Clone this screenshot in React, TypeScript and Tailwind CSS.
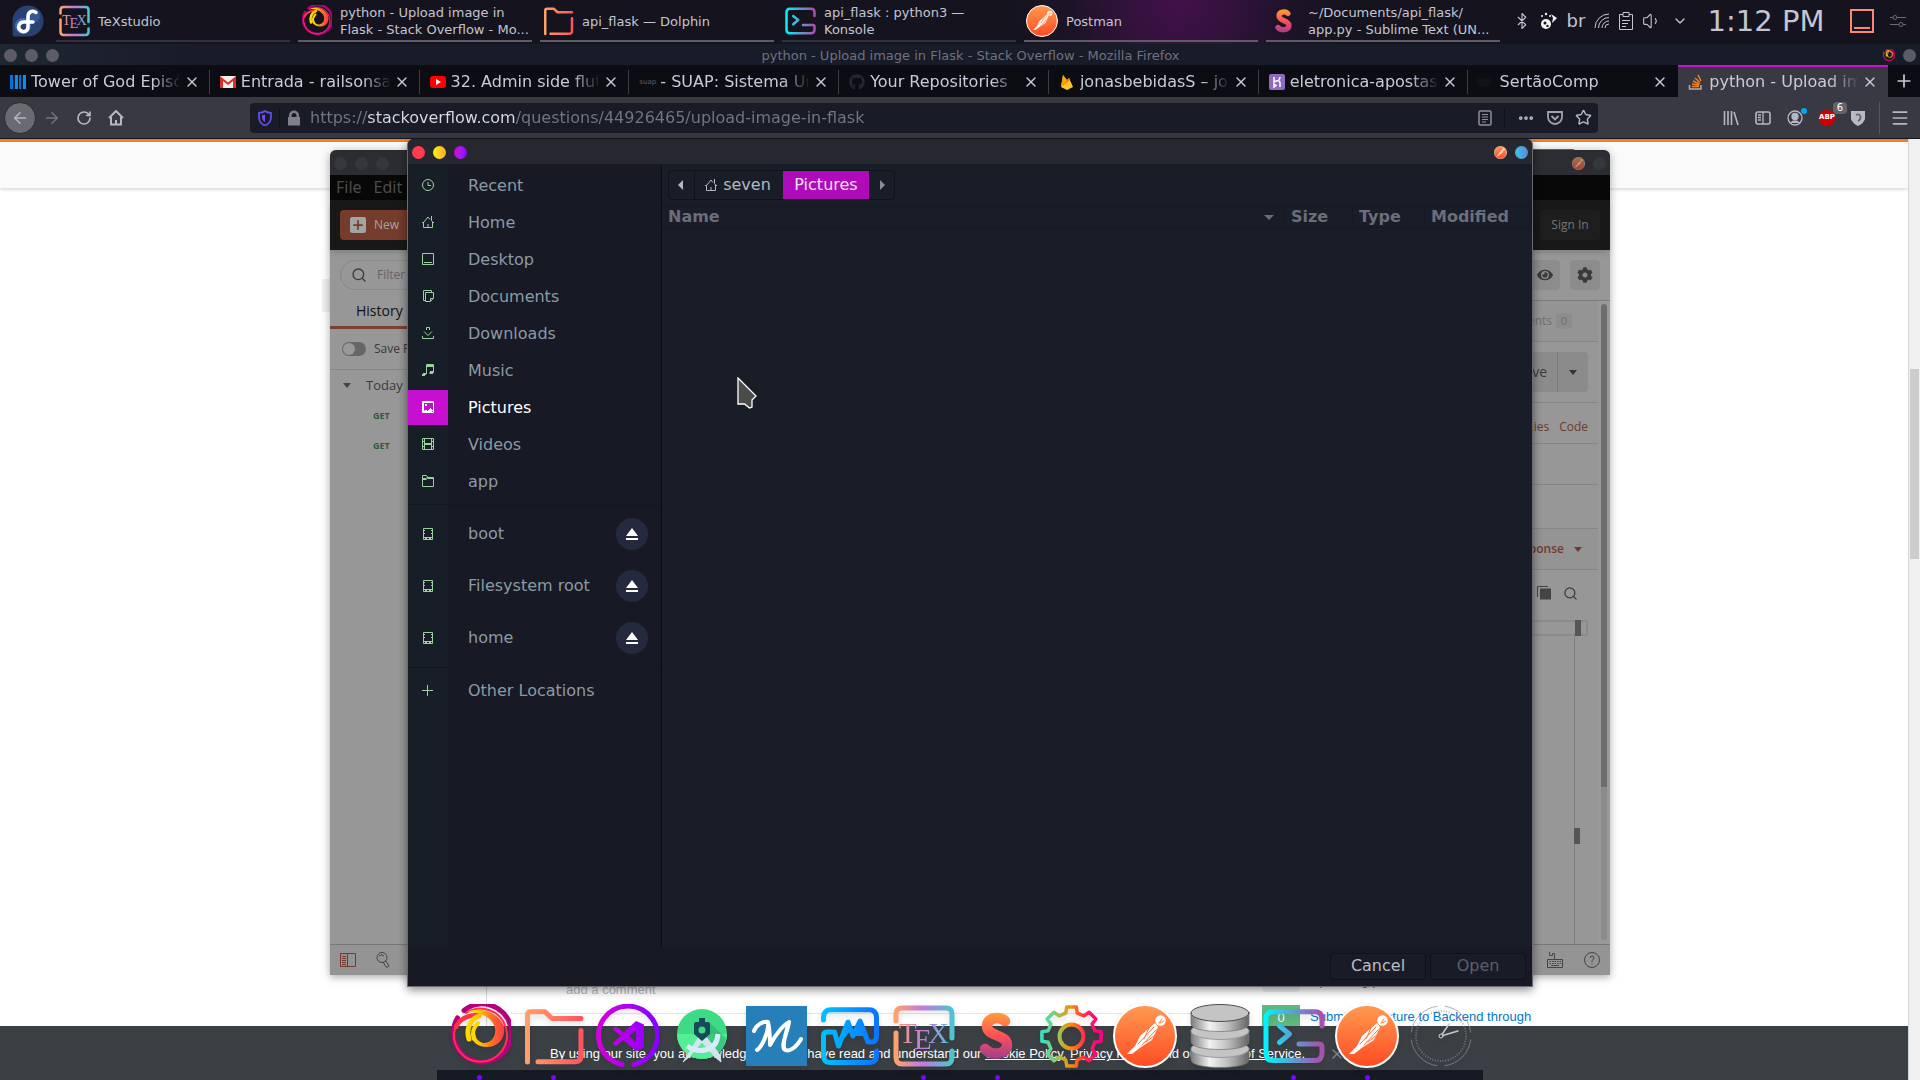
import React from "react";
import {
  ArrowLeft, ArrowRight, RotateCw, Star, X, Plus, Menu, Search, ChevronDown, Bluetooth, Volume1, Ellipsis,
} from "lucide-react";
import { FaGithub, FaCog, FaEye } from "react-icons/fa";

type Kids = { children?: React.ReactNode };

/* ---------- shared gradients ---------- */
const GRADIENTS: { id: string; v?: boolean; stops: string[] }[] = [
  { id: "gFire", stops: ["#fff000", "#ffe000", "#ffc400", "#ff6a2a", "#ff2a4d"] },
  { id: "gFold", stops: ["#ffa268", "#ff5460"] },
  { id: "gVs", stops: ["#d400dc", "#8a00ff"] },
  { id: "gMon", stops: ["#00c3ff", "#0a74ff"] },
  { id: "gTex", stops: ["#ffa36a", "#c07ae0", "#4fc3cf"] },
  { id: "gSub", v: true, stops: ["#ffb02e", "#ff4f58", "#8a3a9a"] },
  { id: "gGear", stops: ["#3ce0c0", "#8ec95a", "#ff8c00", "#ff2850", "#ff0080"] },
  { id: "gPost", v: true, stops: ["#ff974f", "#ff4e25"] },
  { id: "gCyl", stops: ["#7d7d7d", "#f2f2f2", "#bdbdbd", "#6c6c6c"] },
  { id: "gKon", stops: ["#00f4ff", "#5b9fd0", "#a94fb0"] },
];

function Defs() {
  return (
    <svg width="0" height="0" className="absolute" aria-hidden="true">
      <defs>
        {GRADIENTS.map((g) => (
          <linearGradient key={g.id} id={g.id} gradientUnits="userSpaceOnUse" x1="4" y1="4" x2={g.v ? 4 : 60} y2={g.v ? 60 : 4}>
            {g.stops.map((c, i) => (
              <stop key={c} offset={i / (g.stops.length - 1)} stopColor={c} />
            ))}
          </linearGradient>
        ))}
      </defs>
    </svg>
  );
}

function App64({ children, className = "size-16" }: Kids & { className?: string }) {
  return (
    <svg viewBox="0 0 64 64" className={`${className} shrink-0`} fill="none" strokeLinecap="round" strokeLinejoin="round" aria-hidden="true">
      {children}
    </svg>
  );
}

const Firefox = ({ className }: { className?: string }) => (
  <App64 className={className}>
    <path d="M17 6.500 A29 29 0 1 1 10.500 14" stroke="#b4007c" strokeWidth="5" />
    <path d="M19 9 A26.500 26.500 0 1 1 8 24" stroke="#ff2f50" strokeWidth="2" />
    <path d="M9 23 C13 14 22 11 32 11" stroke="#ff3148" strokeWidth="4.500" />
    <path d="M20 8 C34 2 50 8 56 20 C60 30 54 43 40 43 C30 43 24 37 25 30 C27 27 29 30 29 33 C31 38 36 40 40 38.500 C46 37 49 31 48 24 C46 15 36 8 20 8Z" fill="url(#gFire)" />
    <path d="M32 12 C23 15 19 25 22 35" stroke="url(#gFire)" strokeWidth="5" />
    <path d="M31 19 C26 24 25 30 27 35" stroke="#ffd800" strokeWidth="4" />
  </App64>
);
const Folder = ({ className }: { className?: string }) => (
  <App64 className={className}>
    <path d="M6.500 58 V11 Q6.500 7.700 10 7.700 H24 L31 14.500 H60 M60 26.500 V52 Q60 57.700 54 57.700 H17" stroke="url(#gFold)" strokeWidth="5" />
  </App64>
);
const Code = () => (
  <App64>
    <path d="M27 60.500 A29.500 29.500 0 1 1 39 60.500" stroke="url(#gVs)" strokeWidth="5" />
    <path fillRule="evenodd" d="M41 17 L49 20.500 V43.500 L41 47.500 L28.500 36 L21 42 L17.500 39.500 L25.500 32 L17.500 25 L21 22.500 L28.500 28.500Z M41 26.500 L34 32 L41 38Z" fill="url(#gVs)" />
  </App64>
);
const Studio = () => (
  <App64>
    <circle cx="33" cy="30" r="25" fill="#3ddc84" />
    <path d="M8 30 A25 25 0 0 0 58 30Z" fill="#54ee95" />
    <path d="M41 19 L57 34 A25 25 0 0 1 48 50 L33 35Z" fill="#2cae72" opacity=".6" />
    <path d="M29 34 L18 52 L14 58 L20 53 L33 38 L46 53 L52 58 L51 51 L38 34Z" fill="#cfe6ee" stroke="#cfe6ee" strokeWidth="1" />
    <path d="M18 42 C29 50 48 48 49 30" stroke="#d7ecfb" strokeWidth="5" strokeLinecap="butt" />
    <path d="M25 20 Q25 18 27 18 H30 V14 H36 V18 H39 Q41 18 41 20 V30 L33 37 L25 30Z" fill="#16495a" />
    <circle cx="33" cy="26" r="3.500" fill="#3ddc84" />
  </App64>
);
const Script = () => (
  <App64>
    <rect x="3" y="2" width="61" height="60" fill="#267fb8" />
    <path d="M11 27 C13 21 20 17 25 18 C26 26 20 42 14 46 M25 18 C27 26 27 34 27 41 C32 32 40 21 46 18 C45 27 38 40 41 45 C45 49 53 44 58 35 M46 18 C44 26 40 36 41 43" stroke="#fff" strokeWidth="4" />
  </App64>
);
const Monitor = () => (
  <App64>
    <path d="M6.500 16 V13 Q7 5.700 14 5.700 H52 Q59 5.700 59.500 13 V33 Q59 38 55 38 H51 L43 17 L36 32 L31 18 L21.500 42 L17.500 28 H10 Q6.500 28 6.500 32 V52 Q7 58.500 13 58.500 H53 Q59.500 58 59.500 52 V47" stroke="url(#gMon)" strokeWidth="5" />
    <path d="M43 17 L36 32 L48 32Z M31 18 L21.500 42 L34 26Z" fill="url(#gMon)" />
  </App64>
);
const Tex = ({ className }: { className?: string }) => (
  <App64 className={className}>
    <path d="M5 17 V10 Q5 4 11 4 H55 Q61 4 61 10 V34 M61 47 V53 Q61 60 55 60 H11 Q5 60 5 53 V29" stroke="url(#gTex)" strokeWidth="5" />
    <g fill="url(#gTex)" fontFamily="Liberation Serif, serif" fontSize="29">
      <text x="8" y="39">T</text>
      <text x="23" y="45">E</text>
      <text x="37" y="39">X</text>
    </g>
  </App64>
);
const Sublime = ({ className }: { className?: string }) => (
  <App64 className={className}>
    <path d="M40 17 C35 12 22 13 22 22 C22 33 42 30 42 41 C42 51 26 52 20 45" stroke="url(#gSub)" strokeWidth="10.500" />
  </App64>
);
const gearPath = (() => {
  const pts: string[] = [];
  for (let i = 0; i < 8; i++) {
    [[-14, 24], [-9, 30], [9, 30], [14, 24]].forEach(([a, r]) => {
      const t = ((i * 45 + a - 90) * Math.PI) / 180;
      pts.push(`${(32.5 + r * Math.cos(t)).toFixed(1)} ${(32.5 + r * Math.sin(t)).toFixed(1)}`);
    });
  }
  return `M${pts.join("L")}Z`;
})();
const Gear = () => (
  <App64>
    <path d={gearPath} stroke="url(#gGear)" strokeWidth="3.500" />
    <circle cx="32.500" cy="32.500" r="12" stroke="url(#gGear)" strokeWidth="4" />
  </App64>
);
const Postman = ({ className }: { className?: string }) => (
  <App64 className={className}>
    <circle cx="32" cy="32" r="31" fill="url(#gPost)" stroke="#fff" strokeWidth="2" />
    <circle cx="47.500" cy="16.500" r="5.200" fill="#fff" />
    <path d="M46 19 L49 15 M47 19 L51 17" stroke="#ff7a3c" strokeWidth="1" />
    <path d="M42 19 L45 23 L39 36 L28 43 L19 50 L14 50 L22 42 L27 32Z" fill="#fff" />
    <path d="M41 23 L25 40 M43 26 L29 41 M36 24 L31 35 M33 38 L42 31" stroke="#ff7440" strokeWidth="1" />
  </App64>
);
const Database = () => (
  <App64>
    {[45, 27, 9].map((y) => (
      <g key={y}>
        <path d={`M4 ${y} V${y + 11} C4 ${y + 21} 62 ${y + 21} 62 ${y + 11} V${y}Z`} fill="url(#gCyl)" stroke="#707070" strokeWidth=".7" />
        <ellipse cx="33" cy={y} rx="29" ry="8.500" fill="#c4c4c4" stroke={y === 9 ? "#4b4f50" : "#9a9a9a"} strokeWidth="1" />
      </g>
    ))}
  </App64>
);
const Konsole = ({ className }: { className?: string }) => (
  <App64 className={className}>
    <path d="M61 22 V15 Q61 7.700 54 7.700 H12 Q5 7.700 5 15 V49 Q5 56.500 12 56.500 H54 Q61 56.500 61 49 V43 Q61 40 58 40 H38 M18.500 22 L28.500 30 L18.500 38.500" stroke="url(#gKon)" strokeWidth="5" />
  </App64>
);
const Clock = () => (
  <App64>
    <circle cx="32" cy="32" r="30" stroke="#8d9194" strokeWidth="1" strokeDasharray="39 8.100" strokeDashoffset="-4" opacity=".7" />
    <circle cx="32" cy="32" r="25" stroke="#8d9194" strokeWidth="2" strokeDasharray="1 1.600" opacity=".6" strokeLinecap="butt" />
    <path d="M32 32 L40 20 M32 32 L49 27" stroke="#c6c9ca" strokeWidth="1.500" />
    <circle cx="32" cy="32" r="2" fill="#3b4045" stroke="#d6d6d6" />
  </App64>
);
const Fedora = () => (
  <App64 className="size-8">
    <path d="M32 1 A31 31 0 1 1 32 63 H5 Q1 63 1 58 V32 A31 31 0 0 1 32 1Z" fill="#294172" />
    <circle cx="22" cy="42" r="13" stroke="#3c6eb4" strokeWidth="6" />
    <circle cx="42" cy="22" r="14" fill="#3c6eb4" opacity=".5" />
    <path d="M48 15 C40 9 32 15 32 23 V44 C32 52 24 56 17 51 C10 45 14 34 24 34 H42" stroke="#fff" strokeWidth="7" />
  </App64>
);

/* ---------- desktop panel ---------- */
const TASKS = [
  { icon: <Tex className="size-8" />, label: "TeXstudio", dim: true },
  { icon: <Firefox className="size-8" />, label: "python - Upload image in Flask - Stack Overflow - Mo..." },
  { icon: <Folder className="size-8" />, label: "api_flask — Dolphin" },
  { icon: <Konsole className="size-8" />, label: "api_flask : python3 — Konsole", dim: true },
  { icon: <Postman className="size-8" />, label: "Postman" },
  { icon: <Sublime className="size-8" />, label: "~/Documents/api_flask/ app.py - Sublime Text (UN..." },
];

function Panel() {
  return (
    <header className="flex h-11 shrink-0 items-start bg-[radial-gradient(circle_at_1180px_0px,#42104a_0,#34123d_50px,#1d1328_110px,#15131e_170px)] text-[#c3c5d2]">
      <button aria-label="Application launcher" className="flex h-10 w-14 items-center justify-center pt-0.5">
        <Fedora />
      </button>
      <nav className="flex min-w-0 flex-1 gap-2" aria-label="Open windows">
        {TASKS.map((t) => (
          <button key={t.label} className={`flex h-[42px] min-w-0 flex-1 items-center gap-2 border-b-2 pt-0.5 pl-0.5 text-left text-[13px] leading-[17px] ${t.dim ? "border-[#33313d]" : "border-[#5d5b68]"}`}>
            {t.icon}
            <span className="min-w-0 flex-1">{t.label}</span>
          </button>
        ))}
      </nav>
      <div className="flex h-[42px] w-[420px] shrink-0 items-center pl-2">
        <span className="flex w-7 justify-center"><Bluetooth className="size-[18px]" strokeWidth={1.5} /></span>
        <svg viewBox="0 0 18 18" className="mx-1 size-[18px]" fill="#f4f4f4" aria-hidden="true">
          <circle cx="6" cy="12" r="5" />
          <circle cx="5" cy="11" r="1.500" fill="#15131e" /><circle cx="7.500" cy="14" r="1.200" fill="#15131e" />
          <circle cx="2" cy="4" r="1" /><circle cx="6" cy="2" r="1.200" /><circle cx="10" cy="4" r="1" />
          <path d="M11 2 L17 6 L12 11 L13 6Z" />
        </svg>
        <span className="w-7 text-center text-lg">br</span>
        <svg viewBox="0 0 16 16" className="mx-1 size-4" fill="none" stroke="currentColor" aria-hidden="true">
          <path d="M1 15 A14 14 0 0 1 15 1 M4.500 15 A10.500 10.500 0 0 1 15 4.500 M8 15 A7 7 0 0 1 15 8 M11 15 A4 4 0 0 1 15 11" />
        </svg>
        <svg viewBox="0 0 16 18" className="mx-1 h-[18px] w-4" fill="none" stroke="currentColor" aria-hidden="true">
          <path d="M5 2.500 H1.500 V17.500 H14.500 V2.500 H11 M5 .500 H11 V4.500 H5Z M4 8.500 H12 M4 11.500 H10 M4 14.500 H8" />
        </svg>
        <span className="flex w-7 justify-center"><Volume1 className="size-5" strokeWidth={1.3} /></span>
        <span className="flex w-7 justify-center"><ChevronDown className="size-4" /></span>
        <time className="w-36 text-center text-[29px] leading-none">1:12 PM</time>
        <svg viewBox="0 0 24 24" className="ml-3 size-6" fill="none" aria-hidden="true">
          <path d="M1 1 H23 V23 H1Z M4 19 H20" stroke="#ff8672" strokeWidth="2" />
        </svg>
        <svg viewBox="0 0 16 14" className="ml-4 h-3.5 w-4" fill="none" stroke="#696b78" aria-hidden="true">
          <path d="M0 3.500 H3 M7 3.500 H16 M0 10.500 H9 M13 10.500 H16" />
          <circle cx="5" cy="3.500" r="2" /><circle cx="11" cy="10.500" r="2" />
        </svg>
      </div>
    </header>
  );
}

/* ---------- browser ---------- */
const TABS = [
  { label: "Tower of God Episódio", icon: <span className="h-3.5 w-4 shrink-0 bg-[linear-gradient(90deg,#0a6fd0_0_20%,#062040_20%_30%,#0a8ff0_30%_48%,#0d0e14_48%_54%,#0a6fd0_54%_70%,#062040_70%_80%,#0a8ff0_80%)]" /> },
  { label: "Entrada - railsonsantos", icon: <svg viewBox="0 0 16 12" className="w-4 shrink-0" aria-hidden="true"><path d="M0 0H16V12H0Z" fill="#eee" /><path d="M0 12V0L8 6.500L16 0V12H13V5L8 9L3 5V12Z" fill="#d93025" /></svg> },
  { label: "32. Admin side flutter", icon: <svg viewBox="0 0 16 12" className="w-4 shrink-0" aria-hidden="true"><rect width="16" height="12" rx="3" fill="#f00" /><path d="M6 3L11 6L6 9Z" fill="#fff" /></svg> },
  { label: "- SUAP: Sistema Unificado", icon: <span className="w-4 shrink-0 text-[7px] text-[#5b5d66]">suap</span> },
  { label: "Your Repositories", icon: <FaGithub className="size-4 shrink-0 text-[#22262d]" /> },
  { label: "jonasbebidasS – jonas", icon: <svg viewBox="0 0 16 16" className="size-4 shrink-0" aria-hidden="true"><path d="M2 13L4 1L8 6L10 4L14 13L8 16Z" fill="#ffca28" /><path d="M2 13L4 1L8 7Z" fill="#ffa000" /><path d="M2 13L10 4L11 6Z" fill="#f57c00" /></svg> },
  { label: "eletronica-apostas · H", icon: <svg viewBox="0 0 16 16" className="size-4 shrink-0" aria-hidden="true"><rect width="16" height="16" rx="2" fill="#8f6ac0" /><path d="M5 3V8Q11 5 11 9V13M5 10V13L7 11.500ZM11 3Q11 5 9.500 6" stroke="#fff" strokeWidth="1.500" fill="none" /></svg> },
  { label: "SertãoComp", icon: <span className="mr-1 h-2 w-3 shrink-0 bg-[#111318]" /> },
  { label: "python - Upload image", active: true, icon: <svg viewBox="0 0 16 16" className="size-4 shrink-0" fill="none" aria-hidden="true"><path d="M1.500 11V15H13V11" stroke="#b0b0b0" strokeWidth="1.500" /><path d="M4 12.500H11M4 10L11 11M5 7L11.500 10M7 4L12 8.500M10 1L13 7" stroke="#f48024" strokeWidth="1.500" /></svg> },
];

function BrowserTabs() {
  return (
    <div role="tablist" className="flex h-8 shrink-0 bg-[#0c0d13] text-base text-[#c9cad4]">
      {TABS.map((t) => (
        <div key={t.label} className={`flex min-w-0 flex-1 items-center gap-[5px] border-t-2 pr-2.5 pl-2.5 ${t.active ? "border-[#c80fd4] bg-[#383943]" : "border-transparent"}`}>
          {t.icon}
          <button role="tab" aria-selected={!!t.active} className="min-w-0 flex-1 overflow-hidden text-left whitespace-nowrap [mask-image:linear-gradient(90deg,#000_82%,rgba(0,0,0,.1))]">
            {t.label}
          </button>
          <button aria-label={`Close ${t.label}`}><X className="size-4" /></button>
          {!t.active && t.label !== "SertãoComp" && <span className="-mr-2.5 ml-1 h-6 w-px bg-[#3b3c44]" />}
        </div>
      ))}
      <button aria-label="New tab" className="flex w-8 items-center justify-center"><Plus className="size-5" /></button>
    </div>
  );
}

const ShieldIcon = () => (
  <svg viewBox="0 0 16 16" className="size-4 shrink-0" fill="none" aria-hidden="true">
    <path d="M8 1 C10 2.500 12 3 14 3 V7 C14 11 12 14 8 15.500 C4 14 2 11 2 7 V3 C4 3 6 2.500 8 1Z" stroke="#5b50e8" strokeWidth="1.800" />
    <path d="M8 4.500 V12 C6 11 5 9 5 7 V5.500Z" fill="#7a4df0" />
  </svg>
);

function NavBar() {
  return (
    <div className="flex h-[42px] shrink-0 items-center border-b border-[#15161f] bg-[#383943] text-[#b6b7c4]">
      <button aria-label="Back" className="ml-1 flex size-8 items-center justify-center rounded-full border border-[#2b2c33] bg-[#6a6a73]"><ArrowLeft className="size-[18px]" /></button>
      <button aria-label="Forward" className="flex w-8 justify-center text-[#73747f]"><ArrowRight className="size-[18px]" /></button>
      <button aria-label="Reload" className="flex w-8 justify-center"><RotateCw className="size-4" strokeWidth={2.5} /></button>
      <button aria-label="Home page" className="flex w-8 justify-center">
        <svg viewBox="0 0 16 16" className="size-4" fill="none" stroke="currentColor" strokeWidth="2"><path d="M1 8 L8 1 L15 8 M3 7 V14.500 H13 V7 M8 14 V10" /></svg>
      </button>
      <div className="ml-[118px] flex h-[30px] min-w-0 flex-1 items-center rounded bg-[#191c27] pl-[7px]">
        <ShieldIcon />
        <span className="mx-[6px] h-5 w-px bg-[#0e1018]" />
        <svg viewBox="0 0 16 16" className="mr-2 size-4 shrink-0" fill="#7f808c" aria-hidden="true"><path fillRule="evenodd" d="M3 7V5.500A5 5 0 0 1 13 5.500V7H14V15.500H2V7ZM5.500 7H10.500V5.500A2.500 2.500 0 0 0 5.500 5.500Z" /></svg>
        <input aria-label="Address" readOnly value="https://stackoverflow.com/questions/44926465/upload-image-in-flask" className="min-w-0 flex-1 bg-[linear-gradient(90deg,#74767f_58px,#dadbe3_58px_206px,#74767f_206px)] bg-clip-text text-base text-transparent outline-none" />
        <button aria-label="Reader view" className="mx-3">
          <svg viewBox="0 0 14 16" className="h-4 w-3.5" fill="none" stroke="#8e8f9b" strokeWidth="1.500"><rect x="1" y="1" width="12" height="14" rx="1.500" /><path d="M4 4.500H10M4 7H10M4 9.500H10M4 12H8" strokeWidth="1" /></svg>
        </button>
        <span className="h-5 w-px bg-[#0e1018]" />
        <button aria-label="Page actions" className="ml-3"><Ellipsis className="size-[18px]" strokeWidth={3} /></button>
        <button aria-label="Save to Pocket" className="ml-3">
          <svg viewBox="0 0 16 14" className="h-3.5 w-4" fill="none" stroke="#a1a2ae" strokeWidth="1.800"><path d="M1 1H15V6A7 7 0 0 1 1 6ZM4.500 5L8 8.500L11.500 5" /></svg>
        </button>
        <button aria-label="Bookmark" className="mr-1.5 ml-3"><Star className="size-[17px]" /></button>
      </div>
      <div className="ml-[117px] flex items-center gap-4 pl-2">
        <svg viewBox="0 0 16 14" className="h-3.5 w-4" fill="none" stroke="currentColor" strokeWidth="1.600" aria-hidden="true"><path d="M1.500 0V14M5 0V14M8.500 0V14M11 1L15 14" /></svg>
        <svg viewBox="0 0 16 14" className="h-3.5 w-4" fill="none" stroke="currentColor" strokeWidth="1.600" aria-hidden="true"><rect x="1" y="1" width="14" height="12" rx="2" /><path d="M8 1V13M3 4H6M3 6.500H6M3 9H6" strokeWidth="1.300" /></svg>
        <span className="relative">
          <svg viewBox="0 0 16 16" className="size-4" fill="none" stroke="currentColor" strokeWidth="1.300" aria-hidden="true"><circle cx="8" cy="8" r="7" /><circle cx="8" cy="6.500" r="3" fill="currentColor" /><path d="M3.500 13Q8 9 12.500 13" fill="currentColor" /></svg>
          <span className="absolute -top-0.5 -right-1 size-1.5 rounded-full bg-[#00a8f8]" />
        </span>
        <span className="relative flex size-4 items-center justify-center rounded-full bg-[#d00000] text-[7px] font-bold text-white">
          ABP
          <span className="absolute -top-2 -right-3 rounded-sm bg-[#63636b] px-1 text-[10px] leading-[12px] font-normal">6</span>
        </span>
        <svg viewBox="0 0 14 16" className="h-4 w-3.5" aria-hidden="true"><path d="M0 1H14V9Q12 14 7 16Q2 14 0 9Z" fill="#b9bac6" /><path d="M5 5Q9 3 9.500 7Q9.500 10 7 11" stroke="#62636e" strokeWidth="1.800" fill="none" /></svg>
      </div>
      <span className="ml-3.5 h-8 w-px bg-[#54555f]" />
      <button aria-label="Menu" className="flex w-10 justify-center"><Menu className="size-5" /></button>
    </div>
  );
}

/* ---------- page behind the windows ---------- */
function SitePage() {
  return (
    <main className="flex min-h-0 flex-1 bg-white font-['Liberation_Sans',sans-serif] text-[13px]">
      <div className="flex min-w-0 flex-1 flex-col">
        <div className="flex h-[50px] shrink-0 justify-end border-t-[3px] border-b border-t-[#f48024] border-b-[#e4e6e8] bg-[#fafafb] pt-[7px] pr-[332px] shadow-sm">
          <a href="#signup" aria-label="Sign up" className="h-8 w-[70px] rounded-sm bg-[#0086d8]" />
        </div>
        <div className="mt-[90px] ml-[322px] h-[33px] w-2 bg-[#eff0f1]" />
        <div className="mt-auto flex h-[46px] shrink-0 pl-[486px]">
          <div className="w-[754px] border-l border-[#d6d9dc] pl-6">
            <p className="h-[34px] border-b border-[#e4e6e8] pt-0.5 pl-[55px] leading-4 text-[#b4b9be]">add a comment</p>
          </div>
          <div className="ml-[22px] grid grid-cols-[38px_auto] content-start gap-x-[10px] gap-y-[13px] leading-[17px]">
            <span className="h-3 rounded-sm bg-[#eff0f1]" />
            <a href="#uploading" className="-mt-2 h-5 text-[#0077cc]">Uploading pictures</a>
            <span className="h-[21px] bg-[#5fba7d] pt-1 text-center text-white">0</span>
            <a href="#submit" className="pt-[3px] text-[#0077cc]">Submit the picture to Backend through</a>
          </div>
        </div>
        <div className="flex h-[54px] shrink-0 items-center bg-[#3b4045] pt-0.5 pl-[550px] text-white">
          <p>
            By using our site, you acknowledge that you have read and understand our <a href="#cookie" className="underline">Cookie Policy</a>, <a href="#privacy" className="underline">Privacy Policy</a>, and our <a href="#terms" className="underline">Terms of Service</a>.
          </p>
          <button aria-label="Dismiss" className="ml-6"><X className="size-4 text-[#81868a]" /></button>
        </div>
      </div>
      <div className="w-3 border-l border-[#d4d4d4] bg-[#f0f0f0] px-px pt-[230px]">
        <div className="h-[190px] bg-[#cdcdcd]" />
      </div>
    </main>
  );
}

const Dot = ({ className }: { className: string }) => <span className={`size-[13px] rounded-full ${className}`} />;

/* ---------- Postman window ---------- */
function PostmanWindow() {
  return (
    <section aria-label="Postman" className="absolute top-[150px] right-[310px] bottom-[105px] left-[330px] flex flex-col rounded-t-md bg-[#979797] font-['Open_Sans','Noto_Sans',sans-serif] text-xs text-[#3a3a3a] shadow-[0_2px_8px_rgba(0,0,0,.35)]">
      <div className="flex h-[25px] items-center gap-2 rounded-t-md bg-[#2b2d32] px-1 pt-0.5">
        <Dot className="bg-[#36373a]" /><Dot className="bg-[#36373a]" /><Dot className="bg-[#36373a]" />
        <span className="flex-1" />
        <Postman className="size-[13px] opacity-60" /><Dot className="bg-[#36373a]" />
      </div>
      <div className="flex h-[25px] items-center gap-3 bg-[#080808] px-1.5 pb-0.5 font-['Noto_Sans',sans-serif] text-base text-[#4c4c4c]">
        <button>File</button><button>Edit</button>
      </div>
      <div className="flex h-[50px] items-center justify-between bg-[#181818] px-2.5 shadow-md">
        <button className="flex h-[30px] w-24 items-center gap-2 rounded-sm bg-[#753b2b] pl-2.5 text-[#a3a3a3]">
          <span className="flex size-4 items-center justify-center rounded-xs bg-[#a3a3a3]"><Plus className="size-3.5 text-[#753b2b]" strokeWidth={3} /></span>New
        </button>
        <button className="h-[30px] w-[60px] rounded-sm bg-[#1e1e1e] text-[#777]">Sign In</button>
      </div>
      <div className="flex min-h-0 flex-1">
        <aside className="flex w-[300px] flex-col">
          <label className="mx-2.5 mt-2.5 flex h-[30px] items-center gap-2.5 rounded-full border border-[#898989] pl-2.5">
            <Search className="size-4" />
            <input aria-label="Filter" placeholder="Filter" className="w-24 outline-none placeholder:text-[#636363]" />
          </label>
          <button className="mt-1 h-[35px] w-[150px] border-b-[3px] border-[#7c4030] pt-0.5 pl-[26px] text-left text-sm text-[#111]">History</button>
          <label className="flex h-[41px] items-center gap-2 border-b border-[#858585] pl-3">
            <input type="checkbox" aria-label="Save Responses" className="sr-only" />
            <span className="h-3.5 w-6 rounded-full bg-[#666] p-px"><span className="block size-3 rounded-full bg-[#999]" /></span>
            <span>Save Responses</span>
          </label>
          <div className="flex h-[31px] items-center gap-3 pl-3 text-[13px]">
            <svg viewBox="0 0 10 6" className="w-3 pr-0.5" aria-hidden="true"><path d="M1 0H9L5 5Z" fill="#444" /></svg>Today
          </div>
          <span className="h-[30px] pl-[43px] text-[9px] leading-[30px] font-bold text-[#2a5c40]">GET</span>
          <span className="h-[30px] pl-[43px] text-[9px] leading-[30px] font-bold text-[#2a5c40]">GET</span>
        </aside>
        <div className="flex min-w-0 flex-1 flex-col">
          <div className="flex h-[51px] items-center justify-end gap-2.5 border-b border-[#7d7d7d] pr-2.5">
            <button aria-label="Environment quick look" className="flex size-[30px] items-center justify-center rounded-sm bg-[#8c8c8c]"><FaEye className="size-4" /></button>
            <button aria-label="Settings" className="flex size-[30px] items-center justify-center rounded-sm bg-[#8c8c8c]"><FaCog className="size-4" /></button>
          </div>
          <div className="flex min-h-0 flex-1">
            <div className="flex min-w-0 flex-1 flex-col">
              <div className="flex h-[41px] items-center justify-end gap-1 border-b border-[#858585] bg-[#949494] pr-[26px] text-[#6f6f6f]">
                Comments <span className="w-4 rounded-sm bg-[#8d8d8d] text-center text-[11px] leading-4">0</span>
              </div>
              <div className="flex h-[61px] items-center justify-end border-b border-[#858585] pr-2.5">
                <button className="h-10 rounded-l-sm bg-[#8b8b8b] px-2.5 text-sm">Save</button>
                <button aria-label="Save options" className="flex h-10 w-[31px] items-center justify-center rounded-r-sm border-l border-[#7b7b7b] bg-[#8b8b8b]">
                  <svg viewBox="0 0 8 5" className="w-2" aria-hidden="true"><path d="M0 0H8L4 5Z" fill="#333" /></svg>
                </button>
              </div>
              <div className="flex h-[41px] items-center justify-end gap-2.5 border-b border-[#858585] pt-2 pr-2.5 text-[#713a2b]"><a href="#cookies">Cookies</a><a href="#code">Code</a></div>
              <div className="h-[41px] border-b border-[#858585]" />
              <div className="h-11 border-b border-[#858585]" />
              <div className="flex h-[41px] items-center justify-end gap-2.5 border-b border-[#858585] bg-[#949494] pr-4 font-semibold text-[#713a2b]">
                Save Response <svg viewBox="0 0 8 5" className="w-2" aria-hidden="true"><path d="M0 0H8L4 5Z" fill="#713a2b" /></svg>
              </div>
              <div className="flex h-[50px] items-center justify-end gap-3 pr-5 pb-1">
                <svg viewBox="0 0 14 14" className="size-3.5" aria-hidden="true"><path d="M.500 11V.500H11" stroke="#444" fill="none" /><rect x="3" y="2.500" width="11" height="11" fill="#444" /></svg>
                <Search className="size-[15px]" />
              </div>
              <div className="mr-2.5 flex h-4 justify-end border-2 border-[#8b8b8b] pr-[5px]"><span className="-my-0.5 h-4 w-1.5 bg-[#565656]" /></div>
              <div className="mr-[23px] flex flex-1 items-end justify-end border-r border-[#7d7d7d] pb-[100px]"><span className="-mr-1.5 h-4 w-1.5 bg-[#565656]" /></div>
            </div>
            <div className="w-3 bg-[#999] px-[3px] pt-[3px] pb-1">
              <div className="h-full rounded-full bg-[linear-gradient(#6e6e6e_76%,#8b8b8b_76%)]" />
            </div>
          </div>
        </div>
      </div>
      <footer className="flex h-[31px] items-center justify-between border-t border-[#787878] bg-[#949494] px-2.5">
        <span className="flex items-center gap-5">
          <svg viewBox="0 0 16 14" className="h-3.5 w-4" fill="none" stroke="#713a2b" aria-hidden="true"><path d="M.500.500H15.500V13.500H.500ZM7.500 0V14M2 3.500H6M2 5.500H6M2 7.500H6M2 9.500H6M2 11.500H6" /></svg>
          <svg viewBox="0 0 14 16" className="h-4 w-3.5" fill="none" stroke="#444" aria-hidden="true"><circle cx="6" cy="5.500" r="5" /><path d="M3 4Q6 1.500 8 4M7 10L10 15Q12 16 13 14L9.500 8.500" /></svg>
        </span>
        <span className="flex items-center gap-[21px]">
          <svg viewBox="0 0 16 16" className="size-4" fill="none" stroke="#444" aria-hidden="true"><path d="M.500 7.500H15.500V15.500H.500ZM2.500 0V3.500H5.500V1.500H7.500V7" /><path d="M4 13.500H12" /><path d="M2.500 9.500H14M2.500 11.500H14" strokeDasharray="1.500 1" /></svg>
          <svg viewBox="0 0 16 16" className="size-4" fill="none" stroke="#444" aria-hidden="true"><circle cx="8" cy="8" r="7.500" /><path d="M6 6Q6 4 8 4Q10 4 10 6Q10 7 8 8.500V10M8 11.500V12.500" /></svg>
        </span>
      </footer>
    </section>
  );
}

/* ---------- file chooser ---------- */
const HOUSE = "M0 6.500H2M10 6.500H12M1.500 6V11.500H10.500V6M1.500 6.500L6 1L8 3.500M9.500 0V4.500L11 6.500M6 8V11";
const PLACES = [
  { label: "Recent", d: "M6 .500A5.500 5.500 0 1 0 6 11.500A5.500 5.500 0 1 0 6 .500ZM6 3V6.500H9" },
  { label: "Home", d: HOUSE },
  { label: "Desktop", d: "M.500.500H11.500V11.500H.500ZM2 9.500H10" },
  { label: "Documents", d: "M3.500 2.500H11.500V8L8.500 11.500H3.500ZM8.500 11V8.500H11M3 10.500H1.500V.500H9.500V2" },
  { label: "Downloads", d: "M.500 9V11.500H11.500V9M4.500 3V.500H7.500V3M2 4.500L6 8.500L10 4.500" },
  { label: "Music", d: "M4.500 10V.500H11.500V8.500M4 1.500H11.500M4 2.500H11.500M1 9.500H4M0 10.500H4M0 11.500H3M8 7.500H11M7.500 8.500H11.500M7.500 9.500H11" },
  { label: "Pictures", d: "M.500.500H11.500V11.500H.500ZM1.500 1V11M1 1.500H11M3 3.500H5M3 4.500H5M2 10.500H10M2.500 9.500H5M6 9.500H11M7 8.500H10M8 7.500H9", active: true },
  { label: "Videos", d: "M.500.500H11.500V11.500H.500ZM2.500 .500V11.500M9.500 .500V11.500M3 5.500H9M3 6.500H9M1 3.500H2.500M1 8.500H2.500M10 3.500H11M10 8.500H11" },
  { label: "app", d: "M.500 11.500V.500H4.500L6 2.500M.500 11.500H11.500V3.500H5.500L4 4.500H.500M.500 3.500H4M4.500 2.500H11.500V4" },
];
const DISK = "M1.500.500H10.500V11.500H1.500ZM1.500 9.500H10.500M3 10.500H5M7 10.500H9M2.500 2V3M2.500 5V6M9.500 2V3M9.500 5V6";

const Glyph = ({ d }: { d: string }) => (
  <svg viewBox="0 0 12 12" className="size-3" fill="none" stroke="currentColor" aria-hidden="true"><path d={d} /></svg>
);

function Place({ label, d, active, tall, eject }: { label: string; d: string; active?: boolean; tall?: boolean; eject?: boolean }) {
  return (
    <li className={`flex items-center ${tall ? "h-[52px]" : "h-[37px]"}`}>
      <button className="flex min-w-0 flex-1 items-center text-left">
        <span className={`mr-5 flex w-10 items-center justify-center ${tall ? "h-9" : "h-[35px] pb-px"} ${active ? "bg-[#c70fd1] text-white" : "text-[#9bd09f]"}`}><Glyph d={d} /></span>
        <span className={active ? "text-white" : "text-[#8b9ba3]"}>{label}</span>
      </button>
      {eject && (
        <button aria-label={`Eject ${label}`} className="mr-[13px] flex size-8 items-center justify-center rounded-full bg-[#25293d]">
          <svg viewBox="0 0 12 12" className="size-3" fill="#fff" aria-hidden="true"><path d="M0 8L6 0L12 8ZM0 10H12V12H0Z" /></svg>
        </button>
      )}
    </li>
  );
}

const Tri = ({ d, className }: { d: string; className: string }) => (
  <svg viewBox="0 0 10 10" className={className} fill="currentColor" aria-hidden="true"><path d={d} /></svg>
);

function FileChooser() {
  return (
    <section role="dialog" aria-label="Open file" className="absolute top-[139px] right-[387px] bottom-[93px] left-[407px] flex flex-col rounded-t-md border border-t-0 border-[#6d6b70] bg-[#171925] text-base shadow-[0_3px_10px_rgba(0,0,0,.45)]">
      <div className="flex h-[25px] shrink-0 items-center gap-2 rounded-t-md bg-[#26272f] px-1 pt-0.5">
        <Dot className="bg-[#ff3d4f]" />
        <Dot className="bg-linear-to-r from-[#ffee00] to-[#ffab2e]" />
        <Dot className="bg-linear-to-r from-[#cf00d8] to-[#8400ff]" />
        <span className="flex-1" />
        <Postman className="size-[13px]" />
        <Dot className="bg-linear-to-r from-[#35c4dc] to-[#5a86e0]" />
      </div>
      <div className="flex min-h-0 flex-1">
        <nav aria-label="Places" className="w-[254px] shrink-0 border-r border-[#0b0d16] bg-[linear-gradient(90deg,#181e28_40px,#171925_40px)] pt-[3px]">
          <ul>{PLACES.map((p) => <Place key={p.label} {...p} />)}</ul>
          <ul className="mt-1 border-y border-[#141721] py-[3px]">
            {["boot", "Filesystem root", "home"].map((l) => <Place key={l} label={l} d={DISK} tall eject />)}
          </ul>
          <ul className="pt-1"><Place label="Other Locations" d="M0 6.500H11M5.500 1V12" /></ul>
        </nav>
        <div className="flex min-w-0 flex-1 flex-col bg-[#191d28]">
          <div className="flex h-[42px] shrink-0 items-center pl-1.5">
            <div className="flex h-[30px] rounded border border-[#0f111b] text-[#b4b7c1]">
              <button aria-label="Scroll path left" className="flex w-[26px] items-center justify-center border-r border-[#0f111b] pr-0.5"><Tri className="size-2.5" d="M7 0V10L2 5Z" /></button>
              <button className="flex w-[88px] items-center justify-center gap-1.5 pr-0.5"><Glyph d={HOUSE} />seven</button>
              <button className="w-[86px] bg-[#b00bbb] text-[#eee0f0]">Pictures</button>
              <button aria-label="Scroll path right" className="flex w-[25px] items-center justify-center text-[#8b8e98]"><Tri className="size-2.5" d="M3 0V10L8 5Z" /></button>
            </div>
          </div>
          <table className="w-full table-fixed border-y border-[#161923] text-left leading-5 text-[#6b6e7a]">
            <thead>
              <tr className="[&>th]:border-r [&>th]:border-[#161923] [&>th]:px-1.5">
                <th><span className="flex items-center justify-between pr-1">Name<Tri className="size-2.5" d="M0 3H10L5 8Z" /></span></th>
                <th className="w-[68px]">Size</th>
                <th className="w-[72px]">Type</th>
                <th className="w-[107px]">Modified</th>
              </tr>
            </thead>
          </table>
        </div>
      </div>
      <footer className="flex h-[39px] shrink-0 items-center justify-end gap-1 pr-1.5">
        <button className="h-[27px] w-24 rounded border border-[#0f111b] bg-[#191c27] pb-0.5 leading-6 text-[#b9bcc6]">Cancel</button>
        <button className="h-[27px] w-24 rounded border border-[#0f111b] bg-[#191c27] pb-0.5 leading-6 text-[#5c5f6b]">Open</button>
      </footer>
    </section>
  );
}

/* ---------- dock ---------- */
const DOCK: [string, React.ReactNode, boolean][] = [
  ["Firefox", <Firefox />, true],
  ["Files", <Folder />, true],
  ["Code", <Code />, false],
  ["Android Studio", <Studio />, false],
  ["Editor", <Script />, false],
  ["System monitor", <Monitor />, false],
  ["TeXstudio", <Tex />, true],
  ["Sublime Text", <Sublime />, true],
  ["Settings", <Gear />, false],
  ["Postman", <Postman />, false],
  ["Database", <Database />, false],
  ["Konsole", <Konsole />, true],
  ["Postman window", <Postman />, true],
  ["Clock", <Clock />, false],
];

function Dock() {
  return (
    <nav aria-label="Dock" className="absolute bottom-0 left-1/2 flex -translate-x-1/2 rounded-t-sm bg-[linear-gradient(transparent_66px,#171925_66px)] px-[5px]">
      {DOCK.map(([name, icon, running]) => (
        <button key={name} aria-label={name} className="flex h-[76px] w-[74px] flex-col items-center">
          <span className="drop-shadow-md">{icon}</span>
          {running && <span className="mt-[7px] size-[5px] rounded-full bg-[#8400ff]" />}
        </button>
      ))}
    </nav>
  );
}

export default function App() {
  return (
    <div className="relative flex h-screen flex-col overflow-hidden font-['DejaVu_Sans',sans-serif]">
      <Defs />
      <Panel />
      <div className="flex h-[21px] shrink-0 items-center gap-2 bg-linear-to-r from-[#1f2733] via-[#191b28] via-10% to-[#181b28] px-1 pt-0.5 text-[13px] text-[#6f717e]">
        <Dot className="bg-[#5b5c65]" /><Dot className="bg-[#5b5c65]" /><Dot className="bg-[#5b5c65]" />
        <span className="flex-1 text-center leading-[17px]">python - Upload image in Flask - Stack Overflow - Mozilla Firefox</span>
        <Firefox className="size-[13px]" /><Dot className="bg-[#5b5c65]" />
      </div>
      <BrowserTabs />
      <NavBar />
      <SitePage />
      <PostmanWindow />
      <FileChooser />
      <svg viewBox="0 0 20 32" className="absolute top-[377px] left-[737px] h-8 w-5" aria-hidden="true">
        <path d="M1 1L19 19L15 23V30L12.500 31L7.500 27H1Z" fill="#4b4b4b" stroke="#fff" strokeWidth="1.300" />
      </svg>
      <Dock />
    </div>
  );
}
